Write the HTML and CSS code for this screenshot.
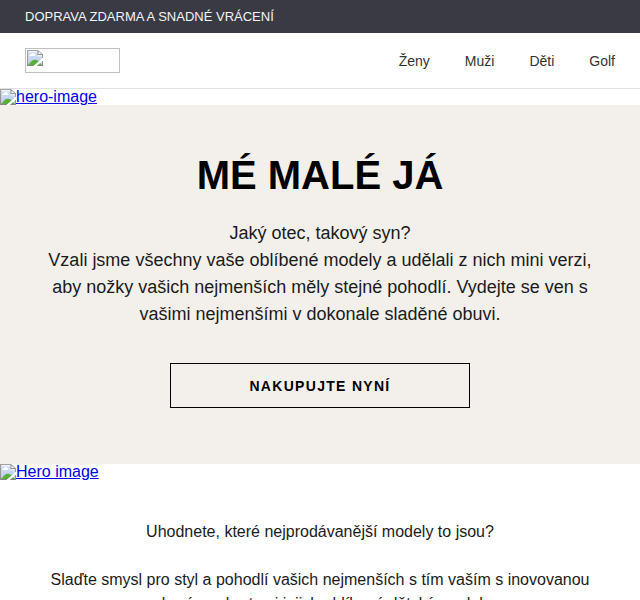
FILE: index.html
```html
<!DOCTYPE html>
<html lang="cs">
<head>
<meta charset="utf-8">
<title>Mé malé já</title>
<link rel="stylesheet" href="styles.css">
</head>
<body>
  <div class="promo-bar">DOPRAVA ZDARMA A SNADNÉ VRÁCENÍ</div>

  <header class="site-header">
    <a class="logo" href="#"><img class="logo-img" src="logo.png" width="95" height="25"></a>
    <nav class="main-nav">
      <a href="#">Ženy</a>
      <a href="#">Muži</a>
      <a href="#">Děti</a>
      <a href="#">Golf</a>
    </nav>
  </header>

  <a class="image-link" href="#"><img class="hero-img" src="hero-top.jpg" alt="hero-image"></a>

  <section class="hero">
    <h1 class="hero-title">MÉ MALÉ JÁ</h1>
    <p class="hero-text">Jaký otec, takový syn?<br>Vzali jsme všechny vaše oblíbené modely a udělali z nich mini verzi, aby nožky vašich nejmenších měly stejné pohodlí. Vydejte se ven s vašimi nejmenšími v dokonale sladěné obuvi.</p>
    <a class="cta" href="#">NAKUPUJTE NYNÍ</a>
  </section>

  <a class="image-link" href="#"><img class="hero-img" src="hero-models.jpg" alt="Hero image"></a>

  <section class="intro">
    <p>Uhodnete, které nejprodávanější modely to jsou?</p>
    <p>Slaďte smysl pro styl a pohodlí vašich nejmenších s tím vaším s inovovanou obuví a vyberte si jejich oblíbený dětský model.</p>
  </section>
</body>
</html>
```

FILE: styles.css
```css
html, body {
  margin: 0;
  padding: 0;
}

body {
  font-family: "Liberation Sans", Arial, sans-serif;
  color: #1b1b1b;
  background: #fff;
}

/* top promo strip */
.promo-bar {
  background: #393a44;
  color: #f4f4f4;
  font-size: 13px;
  height: 33px;
  line-height: 33px;
  padding: 0 25px;
}

/* header with logo and main navigation */
.site-header {
  display: flex;
  align-items: center;
  justify-content: space-between;
  height: 55px;
  padding: 0 25px;
  border-bottom: 1px solid #e2e2e2;
}

.logo {
  display: flex;
}

.logo-img {
  display: block;
}

.main-nav {
  display: flex;
  gap: 35px;
}

.main-nav a {
  color: #333;
  font-size: 14px;
  text-decoration: none;
}

/* full-width picture links */
.image-link {
  display: block;
  color: #0000ee;
  line-height: 16px;
}

.hero-img {
  vertical-align: top;
}

/* beige hero block */
.hero {
  background: #f3f0eb;
  padding: 48px 40px 56px;
  text-align: center;
}

.hero-title {
  margin: 0 0 22px;
  font-size: 40px;
  font-weight: 700;
  color: #000;
}

.hero-text {
  margin: 0 0 35px;
  font-size: 18px;
  line-height: 27px;
}

.cta {
  display: inline-flex;
  align-items: center;
  justify-content: center;
  width: 300px;
  height: 45px;
  box-sizing: border-box;
  border: 1px solid #000;
  color: #000;
  font-size: 14px;
  font-weight: 700;
  letter-spacing: 1.3px;
  text-decoration: none;
}

/* intro copy below the hero */
.intro {
  padding: 40px 40px 0;
  text-align: center;
  font-size: 16px;
  line-height: 24px;
}

.intro p {
  margin: 0 0 24px;
}
```
